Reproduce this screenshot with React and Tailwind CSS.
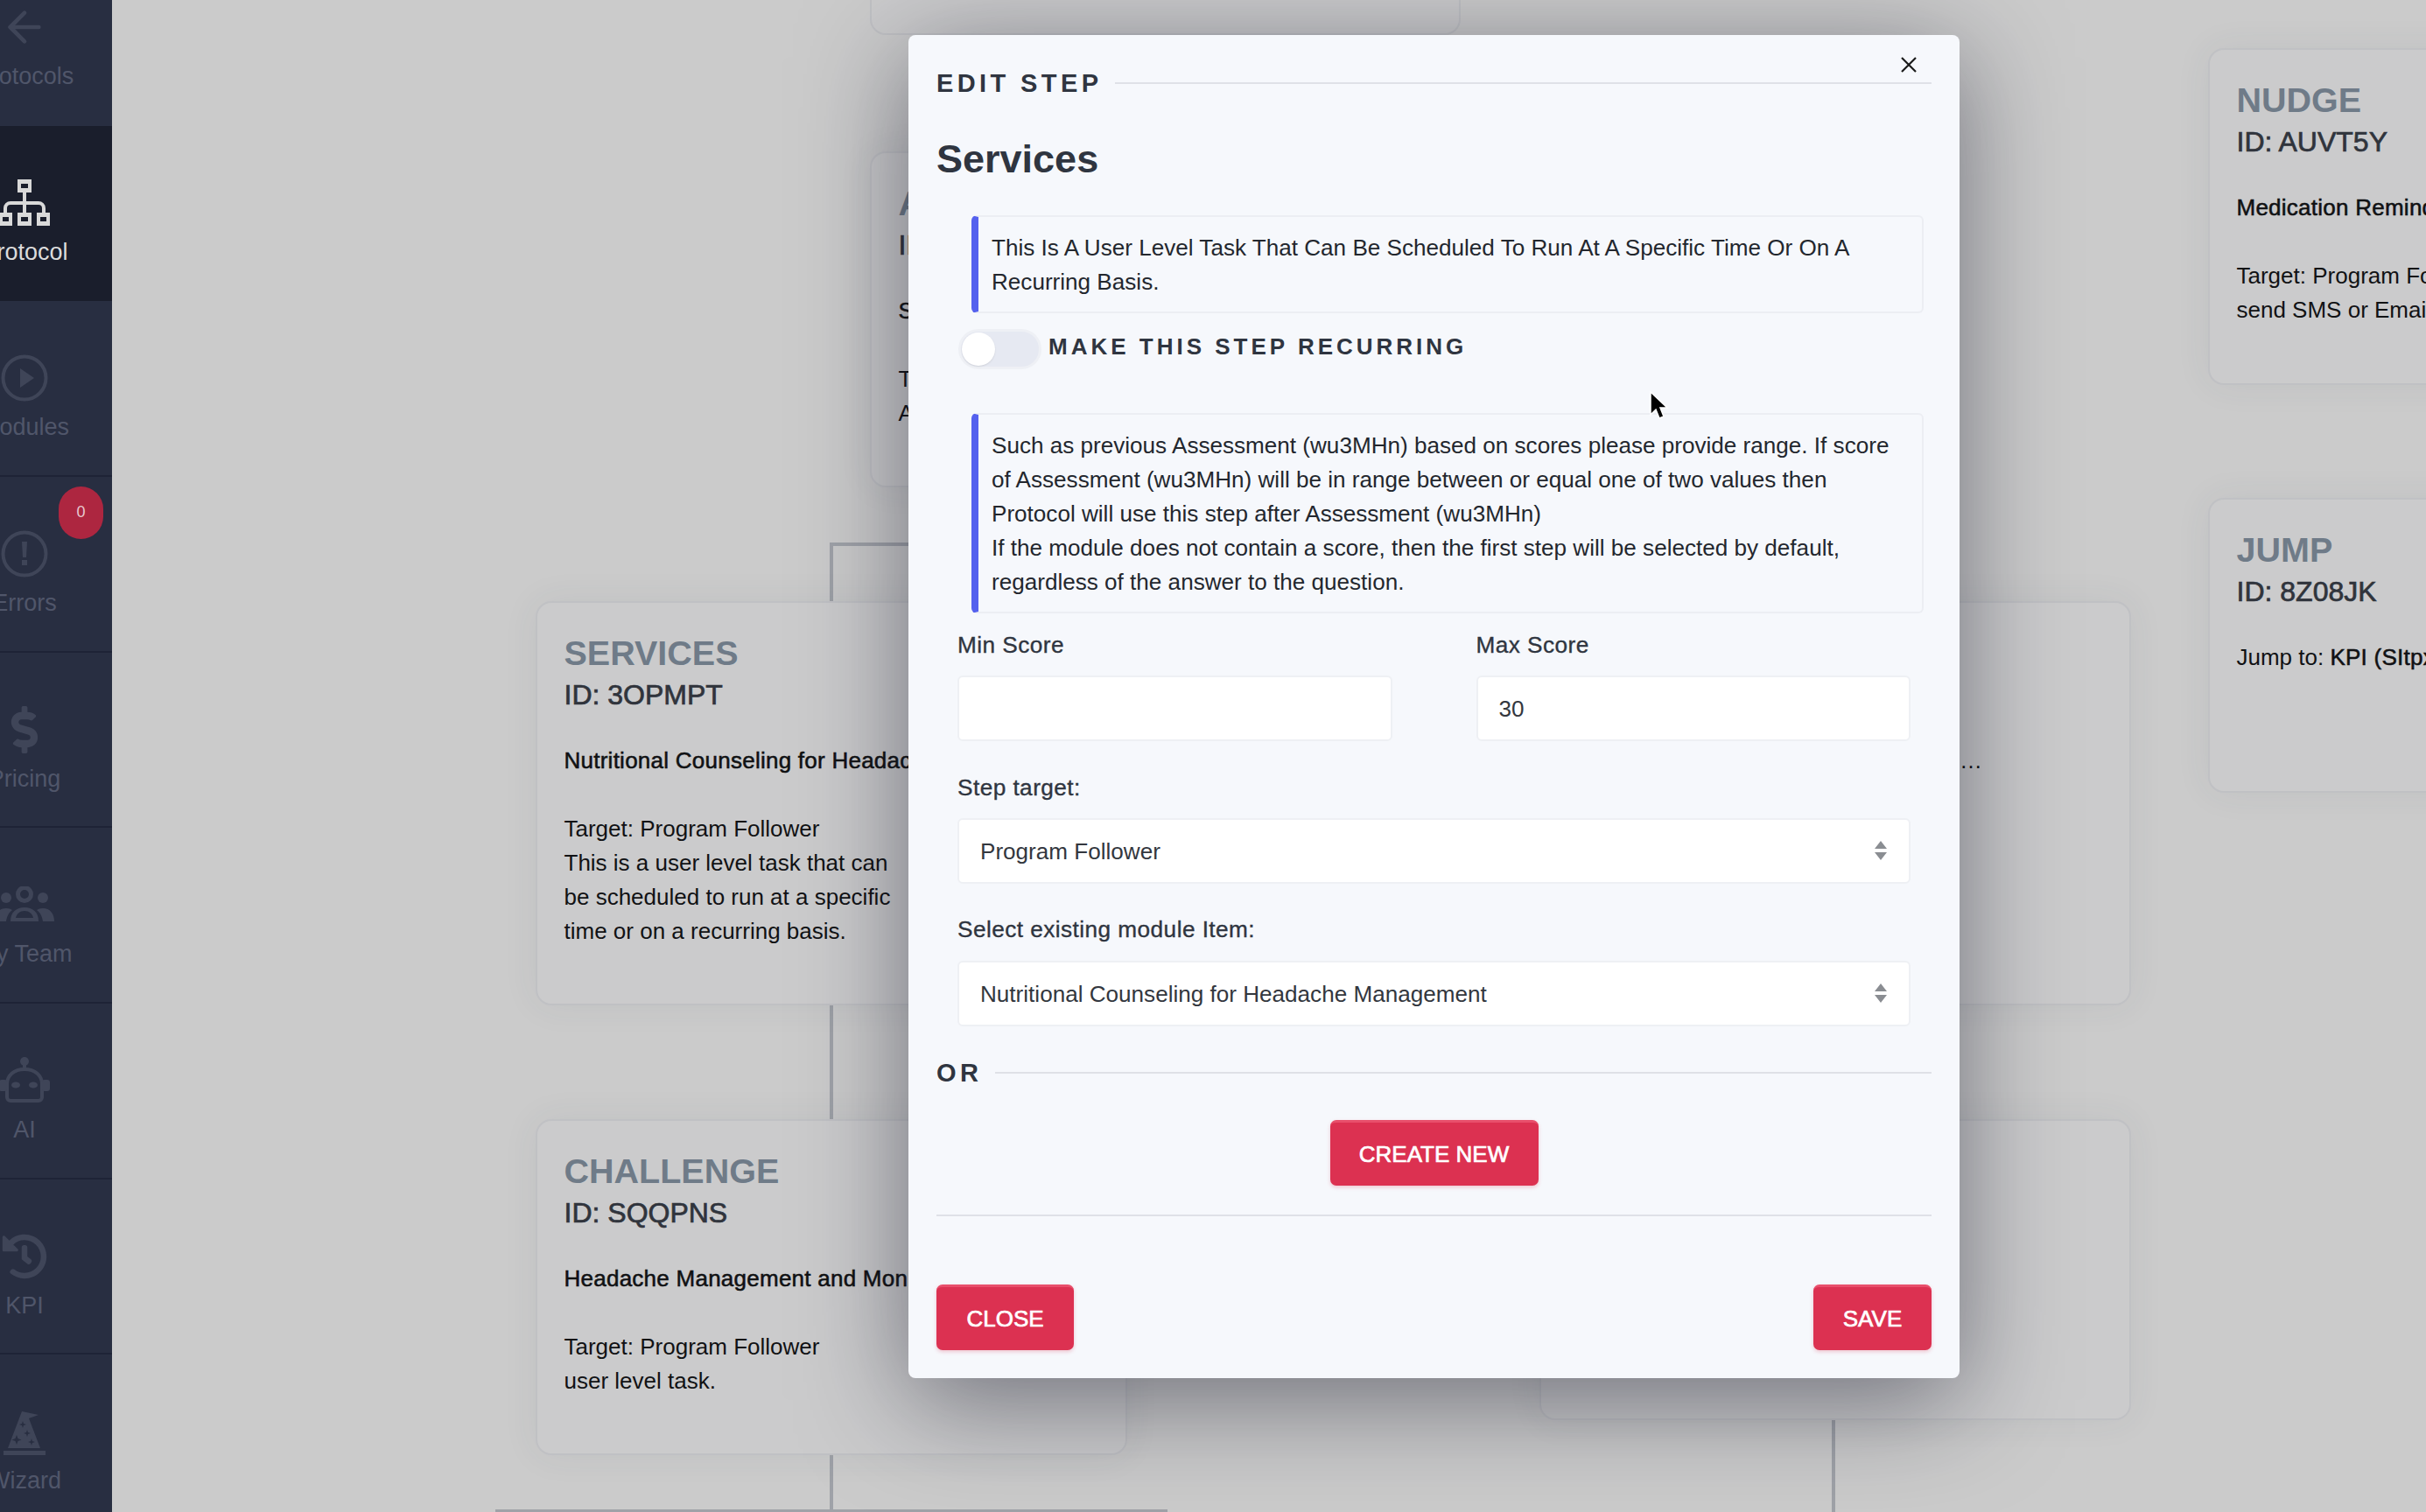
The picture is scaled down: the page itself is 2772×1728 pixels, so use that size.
import React from "react";
import { ArrowLeft } from "lucide-react";
import { FaDollarSign, FaHistory } from "react-icons/fa";

const IC = "#3f4558";

const Sitemap = () => (
  <svg width="58" height="53" viewBox="0 0 58 53">
    <g fill="#d9d9d9">
      <rect x="21" y="0" width="16" height="15" />
      <rect x="27" y="15" width="4" height="23" />
      <path d="M5 38v-5a8 8 0 0 1 8-8h32a8 8 0 0 1 8 8v5h-4v-5a4 4 0 0 0-4-4H13a4 4 0 0 0-4 4v5z" />
      <rect x="0" y="38" width="15" height="15" />
      <rect x="21" y="38" width="16" height="15" />
      <rect x="43" y="38" width="15" height="15" />
    </g>
    <g fill="#1a1e2c">
      <rect x="25" y="5" width="8" height="5" />
      <rect x="4" y="43" width="7" height="5" />
      <rect x="25" y="43" width="8" height="5" />
      <rect x="47" y="43" width="7" height="5" />
    </g>
  </svg>
);

const Play = () => (
  <svg width="56" height="56" viewBox="0 0 56 56">
    <circle cx="28" cy="28" r="24.5" fill="none" stroke={IC} strokeWidth="4" />
    <path d="M23 17l16 11-16 11z" fill={IC} />
  </svg>
);

const Alert = () => (
  <svg width="56" height="56" viewBox="0 0 56 56">
    <circle cx="28" cy="28" r="24.5" fill="none" stroke={IC} strokeWidth="4" />
    <path d="M25 14h6l-1 18h-4z" fill={IC} />
    <rect x="25" y="35" width="6" height="6" fill={IC} />
  </svg>
);

const Robot = () => (
  <svg width="58" height="56" viewBox="0 0 58 56">
    <circle cx="29" cy="6" r="5" fill={IC} />
    <rect x="27" y="8" width="4" height="8" fill={IC} />
    <path d="M9 32c0-10 8-17 20-17s20 7 20 17v15a4 4 0 0 1-4 4H13a4 4 0 0 1-4-4z" fill="none" stroke={IC} strokeWidth="4" />
    <rect x="0" y="27" width="9" height="13" rx="3" fill={IC} />
    <rect x="49" y="27" width="9" height="13" rx="3" fill={IC} />
    <ellipse cx="19" cy="33" rx="5" ry="3.6" fill={IC} />
    <ellipse cx="39" cy="33" rx="5" ry="3.6" fill={IC} />
  </svg>
);

const Team = () => (
  <svg width="68" height="42" viewBox="0 0 68 42">
    <circle cx="34" cy="9" r="7.500" fill="none" stroke={IC} strokeWidth="5" />
    <circle cx="13" cy="13" r="6" fill={IC} />
    <circle cx="55" cy="13" r="6" fill={IC} />
    <path d="M18 40c0-11 7-16 16-16s16 5 16 16z" fill={IC} />
    <path d="M24 36c1-5 5-8 10-8s9 3 10 8z" fill="#282e41" />
    <path d="M0 40c0-9 5-15 13-15 3 0 5 .8 7 2-4 3-6 7-7 13z" fill={IC} />
    <path d="M68 40c0-9-5-15-13-15-3 0-5 .8-7 2 4 3 6 7 7 13z" fill={IC} />
  </svg>
);

const Wizard = () => (
  <svg width="56" height="56" viewBox="0 0 56 56">
    <path d="M9 47L25 5l19 4-11 4 13 34z" fill={IC} />
    <rect x="4" y="50" width="48" height="5" fill={IC} />
    <g fill="#282e41">
      <path d="M26 16l1 3 3 1-3 1-1 3-1-3-3-1 3-1z" />
      <path d="M31 26l1 3 3 1-3 1-1 3-1-3-3-1 3-1z" />
      <path d="M19 32l1.500 4 4 1.500-4 1.500-1.500 4-1.500-4-4-1.500 4-1.500z" />
      <path d="M36 36l1 3 3 1-3 1-1 3-1-3-3-1 3-1z" />
    </g>
  </svg>
);

const items = [
  { label: "Protocols", icon: <ArrowLeft size={56} color={IC} strokeWidth={2} /> },
  { label: "Protocol", icon: <Sitemap />, active: true },
  { label: "Modules", icon: <Play />, border: true },
  { label: "Errors", icon: <Alert />, border: true, badge: true },
  { label: "Pricing", icon: <FaDollarSign size={54} color={IC} />, border: true },
  { label: "My Team", icon: <Team />, border: true },
  { label: "AI", icon: <Robot />, border: true },
  { label: "KPI", icon: <FaHistory size={52} color={IC} />, border: true },
  { label: "Wizard", icon: <Wizard /> },
];

function Sidebar() {
  return (
    <aside className="w-[128px] shrink-0 h-full overflow-hidden bg-[#282e41]">
      <div className="w-[200px] ml-[-72px] mt-[-57px]">
        {items.map((it) => (
          <div
            key={it.label}
            className={
              "relative h-[200.67px] flex flex-col items-center pt-[60px] " +
              (it.active ? "bg-[#1a1e2c] " : "") +
              (it.border ? "border-b-2 border-[#1e2336]" : "")
            }
          >
            <div className="h-[56px] flex items-center justify-center">{it.icon}</div>
            <div className={"mt-[13px] text-[27px] leading-[30px] " + (it.active ? "text-[#dcdcdc]" : "text-[#50566a]")}>
              {it.label}
            </div>
            {it.badge && (
              <div className="absolute left-[139px] top-[11px] w-[51px] h-[60px] rounded-full bg-[#ad2640] text-[#e8c8cf] text-[18px] flex items-center justify-center">
                0
              </div>
            )}
          </div>
        ))}
      </div>
    </aside>
  );
}

function Card({ className, title, id, children }) {
  return (
    <div className={"absolute rounded-[18px] border-2 border-[#c0c1c4] bg-[#cbcbcc] shadow-[0_0_40px_rgba(60,65,80,0.07)] pl-[30.500px] pt-[36px] overflow-hidden " + className}>
      <div className="text-[39.500px] leading-[42px] font-bold text-[#6f7b88] whitespace-nowrap">{title}</div>
      <div className="mt-[9px] text-[32px] leading-[37px] text-[#30343c] [-webkit-text-stroke:0.7px_#30343c] whitespace-nowrap">{id}</div>
      <div className="text-[26px] leading-[39px] text-[#111214]">{children}</div>
    </div>
  );
}

const Strong = ({ children }) => (
  <div className="mt-[37px] whitespace-nowrap tracking-[0.25px] [-webkit-text-stroke:0.55px_#0f1012]">{children}</div>
);

function Canvas() {
  return (
    <main className="relative flex-1 h-full overflow-hidden bg-[#cbcbcb]">
      <div className="absolute left-[820px] top-[620px] w-[300px] h-[4px] bg-[#9fa2a8]" />
      <div className="absolute left-[820px] top-[620px] w-[4px] h-[67px] bg-[#9fa2a8]" />
      <div className="absolute left-[820px] top-[1149px] w-[4px] h-[130px] bg-[#9fa2a8]" />
      <div className="absolute left-[820px] top-[1663px] w-[4px] h-[65px] bg-[#9fa2a8]" />
      <div className="absolute left-[438px] top-[1725px] w-[768px] h-[3px] bg-[#9fa2a8]" />
      <div className="absolute left-[1965px] top-[1623px] w-[4px] h-[105px] bg-[#9fa2a8]" />

      <div className="absolute left-[866px] top-[-100px] w-[675px] h-[140px] rounded-[18px] border-2 border-[#c0c1c4] bg-[#cbcbcc]" />
      <Card className="left-[866px] top-[173px] w-[675px] h-[384px]" title="ASSESSMENT" id="ID: WU3MHN">
        <Strong>Sleep Assessment</Strong>
        <div className="mt-[39px]">Target: Program Follower</div>
        <div>A score based assessment.</div>
      </Card>
      <Card className="left-[484px] top-[687px] w-[676px] h-[462px]" title="SERVICES" id="ID: 3OPMPT">
        <Strong>Nutritional Counseling for Headache Management</Strong>
        <div className="mt-[39px]">Target: Program Follower</div>
        <div className="w-[400px]">This is a user level task that can be scheduled to run at a specific time or on a recurring basis.</div>
      </Card>
      <Card className="left-[484px] top-[1279px] w-[676px] h-[384px]" title="CHALLENGE" id="ID: SQQPNS">
        <Strong>Headache Management and Monitoring</Strong>
        <div className="mt-[39px]">Target: Program Follower</div>
        <div>user level task.</div>
      </Card>
      <Card className="left-[1631px] top-[687px] w-[676px] h-[462px]" title="SERVICES" id="ID: 7XKQ2M">
        <div className="mt-[37px] w-[474px] truncate text-[#0f1012]">Stress Management and Relaxation Techniques Training</div>
      </Card>
      <Card className="left-[1631px] top-[1279px] w-[676px] h-[344px]" title="CHALLENGE" id="ID: 4RT9LD">
        <Strong>Daily Check In</Strong>
      </Card>
      <Card className="left-[2395px] top-[55px] w-[500px] h-[385px]" title="NUDGE" id="ID: AUVT5Y">
        <Strong>Medication Reminder</Strong>
        <div className="mt-[39px] whitespace-nowrap">Target: Program Follower</div>
        <div className="whitespace-nowrap">send SMS or Email reminder</div>
      </Card>
      <Card className="left-[2395px] top-[569px] w-[500px] h-[337px]" title="JUMP" id="ID: 8Z08JK">
        <div className="mt-[37px] whitespace-nowrap">
          Jump to: <span className="tracking-[0.25px] [-webkit-text-stroke:0.55px_#0f1012]">KPI (SItpxQ)</span>
        </div>
      </Card>
    </main>
  );
}

const Divider = () => <div className="flex-1 h-[2px] bg-[#dfe1e7]" />;

const Info = ({ className, children }) => (
  <div className={"ml-[40px] mr-[9px] rounded-[6px] border-2 border-l-[8px] border-[#eceef3] border-l-[#5561ee] pt-[16px] pb-[14px] pl-[15px] pr-[20px] text-[26.100px] leading-[39px] text-[#23272e] " + className}>
    {children}
  </div>
);

const Label = ({ className = "", children }) => (
  <div className={"text-[26.200px] leading-[39px] tracking-[0.45px] text-[#2f3540] [-webkit-text-stroke:0.35px_#2f3540] " + className}>{children}</div>
);

const Arrows = () => (
  <svg className="absolute right-[26px] top-[26px] pointer-events-none" width="16" height="22" viewBox="0 0 16 22">
    <path d="M8 0l7 9H1z M8 22l7-9H1z" fill="#8a8d92" />
  </svg>
);

const Btn = ({ className = "", children }) => (
  <button className={"h-[75px] rounded-[7px] bg-[#dc3151] border-t-[3px] border-t-[#e84f6b] shadow-[0_2px_4px_rgba(220,49,81,0.25)] text-white text-[26px] [-webkit-text-stroke:0.7px_#ffffff] uppercase " + className}>
    {children}
  </button>
);

const fieldCls = "w-full h-[75px] bg-white rounded-[6px] border-2 border-[#eef0f4] text-[26.100px] text-[#33373e] pl-[24px] pt-[2px] outline-none appearance-none";

function Modal() {
  return (
    <div className="absolute left-[1038px] top-[40px] w-[1201px] rounded-[8px] bg-[#f6f8fc] px-[32px] pt-[39px] pb-[32px] shadow-[0_25px_120px_rgba(20,22,40,0.5)] font-['Liberation_Sans',sans-serif]">
      <button className="absolute left-[1132px] top-[23px] w-[22px] h-[22px] flex items-center justify-center text-[#111]">
        <svg width="20" height="20" viewBox="0 0 20 20"><path d="M2 2l16 16M18 2L2 18" stroke="#1a1a1a" strokeWidth="2.200" /></svg>
      </button>
      <div className="flex items-center gap-[15px]">
        <div className="text-[29px] leading-[32px] font-bold tracking-[4.400px] text-[#2f3540]">EDIT STEP</div>
        <Divider />
      </div>
      <h2 className="mt-[44px] text-[45px] leading-[54px] font-bold text-[#2f3540]">Services</h2>
      <Info className="mt-[37px]">This Is A User Level Task That Can Be Scheduled To Run At A Specific Time Or On A Recurring Basis.</Info>
      <div className="mt-[18px] ml-[25px] flex items-center gap-[8px]">
        <div className="relative w-[95px] h-[46px] rounded-full bg-[#e6e9f2] border-[3px] border-[#eef0f5]">
          <div className="absolute left-[1px] top-[1px] w-[38px] h-[38px] rounded-full bg-white shadow-[0_1px_2px_rgba(0,0,0,0.1)]" />
        </div>
        <div className="pb-[7px] text-[26px] leading-[32px] font-bold tracking-[4px] text-[#2f3540]">MAKE THIS STEP RECURRING</div>
      </div>
      <Info className="mt-[50px]">
        Such as previous Assessment (wu3MHn) based on scores please provide range. If score of Assessment (wu3MHn) will be in range between or equal one of two values then Protocol will use this step after Assessment (wu3MHn)
        <br />
        If the module does not contain a score, then the first step will be selected by default, regardless of the answer to the question.
      </Info>
      <div className="mx-[24px] mt-[17px] grid grid-cols-2 gap-x-[96px]">
        <div>
          <Label>Min Score</Label>
          <input className={fieldCls + " mt-[15px]"} defaultValue="" />
        </div>
        <div>
          <Label>Max Score</Label>
          <input className={fieldCls + " mt-[15px]"} defaultValue="30" />
        </div>
      </div>
      <div className="mx-[24px]">
        <Label className="mt-[34px]">Step target:</Label>
        <div className="relative mt-[15px]">
          <select className={fieldCls} defaultValue="a"><option value="a">Program Follower</option></select>
          <Arrows />
        </div>
        <Label className="mt-[33px]">Select existing module Item:</Label>
        <div className="relative mt-[16px]">
          <select className={fieldCls} defaultValue="a"><option value="a">Nutritional Counseling for Headache Management</option></select>
          <Arrows />
        </div>
      </div>
      <div className="mt-[37px] flex items-center gap-[15px]">
        <div className="text-[29px] leading-[32px] font-bold tracking-[4.400px] text-[#2f3540]">OR</div>
        <Divider />
      </div>
      <div className="mt-[38px] flex justify-center">
        <Btn className="w-[238px]">Create New</Btn>
      </div>
      <div className="mt-[33px] h-[2px] bg-[#dfe1e7]" />
      <div className="mt-[78px] flex justify-between">
        <Btn className="w-[157px]">Close</Btn>
        <Btn className="w-[135px]">Save</Btn>
      </div>
    </div>
  );
}

export default function App() {
  return (
    <div className="relative w-[2772px] h-[1728px] overflow-hidden flex font-['Liberation_Sans',sans-serif]">
      <Sidebar />
      <Canvas />
      <Modal />
      <svg className="absolute left-[1884px] top-[446px]" width="24" height="36" viewBox="0 0 24 36">
        <path d="M2 2v26l6-6 4 10 5-2-4-10h8z" fill="#000" stroke="#fff" strokeWidth="1.500" />
      </svg>
    </div>
  );
}
